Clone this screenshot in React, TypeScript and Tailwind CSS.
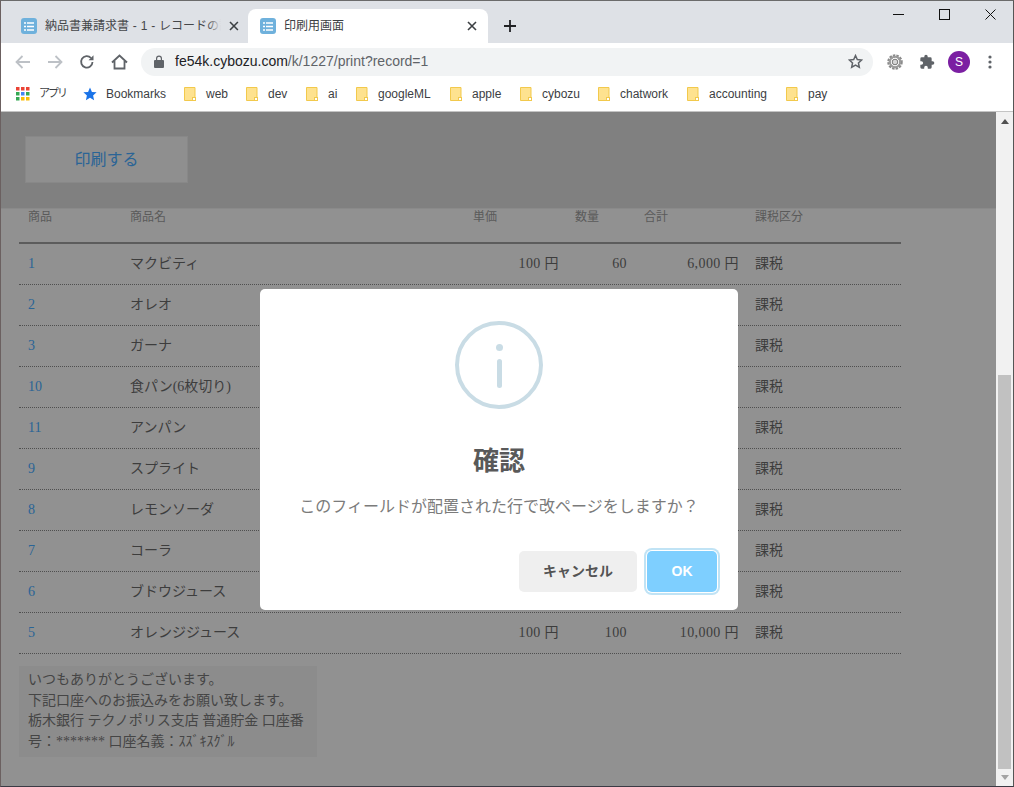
import React from 'react';

const rows = [
  { no: '1', name: 'マクビティ', price: '100 円', qty: '60', total: '6,000 円' },
  { no: '2', name: 'オレオ', price: '100 円', qty: '40', total: '4,000 円' },
  { no: '3', name: 'ガーナ', price: '100 円', qty: '50', total: '5,000 円' },
  { no: '10', name: '食パン(6枚切り)', price: '100 円', qty: '10', total: '1,000 円' },
  { no: '11', name: 'アンパン', price: '100 円', qty: '20', total: '2,000 円' },
  { no: '9', name: 'スプライト', price: '100 円', qty: '30', total: '3,000 円' },
  { no: '8', name: 'レモンソーダ', price: '100 円', qty: '30', total: '3,000 円' },
  { no: '7', name: 'コーラ', price: '100 円', qty: '70', total: '7,000 円' },
  { no: '6', name: 'ブドウジュース', price: '100 円', qty: '80', total: '8,000 円' },
  { no: '5', name: 'オレンジジュース', price: '100 円', qty: '100', total: '10,000 円' },
];

const folders = [
  { label: 'web', w: 'w-[62px]' },
  { label: 'dev', w: 'w-[60px]' },
  { label: 'ai', w: 'w-[50px]' },
  { label: 'googleML', w: 'w-[94px]' },
  { label: 'apple', w: 'w-[70px]' },
  { label: 'cybozu', w: 'w-[78px]' },
  { label: 'chatwork', w: 'w-[89px]' },
  { label: 'accounting', w: 'w-[99px]' },
  { label: 'pay', w: 'w-[50px]' },
];

function TabIcon() {
  return (
    <div className="w-4 h-4 rounded-[3px] bg-[#6fb1dc] flex items-center justify-center shrink-0">
      <svg width="10" height="9" viewBox="0 0 10 9" fill="none" stroke="#fff" strokeWidth="1.3">
        <path d="M0 1h2M3 1h7M0 4.5h2M3 4.5h7M0 8h2M3 8h7" />
      </svg>
    </div>
  );
}

function CloseX() {
  return (
    <svg width="10" height="10" viewBox="0 0 10 10" stroke="#3c4043" strokeWidth="1.6">
      <path d="M1 1l8 8M9 1l-8 8" />
    </svg>
  );
}

function Folder() {
  return (
    <svg width="12" height="14" viewBox="0 0 12 14" className="shrink-0">
      <path d="M.5.5h10.500v11.500h-1.500v1.500h-9z" fill="#fee28f" stroke="#f2c94c" />
      <rect x="8.500" y="10.500" width="3" height="3" fill="#fff" stroke="#f2c94c" />
    </svg>
  );
}

export default function App() {
  return (
    <div className="relative w-[1014px] h-[787px] overflow-hidden bg-white flex flex-col font-['Liberation_Sans','Noto_Sans_CJK_JP',sans-serif] border-l border-t border-r border-b border-l-[#6b6060] border-t-[#6b6b6b] border-r-[#555] border-b-[#3a3a44]">
      {/* tab strip */}
      <div className="h-[42px] bg-[#dee1e6] flex items-end shrink-0 relative">
        <div className="w-[247px] h-[34px] flex items-center pl-[20px] pr-[9px] gap-[8px]">
          <TabIcon />
          <div className="relative w-[178px] overflow-hidden">
            <span className="block text-[12px] text-[#45474a] whitespace-nowrap [word-spacing:0.5px]">納品書兼請求書 - 1 - レコードの詳細</span>
            <div className="absolute right-0 top-0 bottom-0 w-[14px] bg-gradient-to-r from-transparent to-[#dee1e6]"></div>
          </div>
          <CloseX />
        </div>
        <div className="w-[240px] h-[34px] bg-white rounded-t-[8px] flex items-center pl-[12px] pr-[11px] gap-[8px]">
          <TabIcon />
          <span className="text-[12px] text-[#3c4043] flex-1">印刷用画面</span>
          <CloseX />
        </div>
        <div className="ml-[16px] h-[34px] flex items-center">
          <svg width="12" height="12" viewBox="0 0 12 12" stroke="#202124" strokeWidth="1.800">
            <path d="M6 0v12M0 6h12" />
          </svg>
        </div>
        <div className="ml-auto self-start flex items-center pt-[8px] pr-[17px] gap-[35px]">
          <svg width="11" height="11" viewBox="0 0 11 11" stroke="#111" strokeWidth="1"><path d="M0 5.500h11" /></svg>
          <svg width="11" height="11" viewBox="0 0 11 11" fill="none" stroke="#111" strokeWidth="1"><rect x=".5" y=".5" width="10" height="10" /></svg>
          <svg width="11" height="11" viewBox="0 0 11 11" stroke="#111" strokeWidth="1"><path d="M.5.500l10 10M10.500.500l-10 10" /></svg>
        </div>
      </div>

      {/* toolbar */}
      <div className="h-[37px] bg-white flex items-center shrink-0">
        <div className="w-[140px] flex items-center pl-[13px]">
          <svg width="18" height="16" viewBox="0 0 18 16" fill="none" stroke="#bdc1c6" strokeWidth="1.800" className="mr-[14px]"><path d="M16 8H2.500M8.500 2L2.500 8l6 6" /></svg>
          <svg width="18" height="16" viewBox="0 0 18 16" fill="none" stroke="#bdc1c6" strokeWidth="1.800" className="mr-[15px]"><path d="M2 8h13.500M9.500 2l6 6-6 6" /></svg>
          <svg width="16" height="16" viewBox="0 0 16 16" fill="none" stroke="#5f6368" strokeWidth="1.800" className="mr-[16px]"><path d="M13.500 8A5.700 5.700 0 1 1 12 4" /><path d="M14.500 1.200v5h-5z" fill="#5f6368" stroke="none" /></svg>
          <svg width="17" height="16" viewBox="0 0 17 16" fill="none" stroke="#5f6368" strokeWidth="1.800"><path d="M1 8.500L8.500 1.500 16 8.500M3.500 7v7.500h10V7" /></svg>
        </div>
        <div className="w-[732px] h-[28px] rounded-full bg-[#f1f3f4] flex items-center pl-[13px] pr-[10px]">
          <svg width="10" height="13" viewBox="0 0 10 13" className="shrink-0 mr-[11px]"><path d="M1 5h1V3.500a3 3 0 0 1 6 0V5h1a1 1 0 0 1 1 1v6a1 1 0 0 1-1 1H1a1 1 0 0 1-1-1V6a1 1 0 0 1 1-1zm2.200 0h3.600V3.500a1.800 1.800 0 0 0-3.600 0z" fill="#5f6368" /></svg>
          <span className="text-[14px] text-[#202124] flex-1">fe54k.cybozu.com<span className="text-[#5f6368]">/k/1227/print?record=1</span></span>
          <svg width="15" height="15" viewBox="0 0 24 24" fill="none" stroke="#5f6368" strokeWidth="2.400"><path d="M12 2.500l2.900 6.300 6.900.8-5.100 4.700 1.400 6.800-6.100-3.500-6.100 3.500 1.400-6.800L2.200 9.600l6.900-.8z" /></svg>
        </div>
        <div className="flex items-center pl-[14px]">
          <svg width="16" height="16" viewBox="0 0 16 16" className="mr-[16px]">
            <circle cx="8" cy="8" r="6" fill="none" stroke="#8a8a8a" strokeWidth="3.500" strokeDasharray="2.200 1" />
            <circle cx="8" cy="8" r="5.200" fill="none" stroke="#9b9b9b" strokeWidth="2" />
            <circle cx="8" cy="8" r="2.800" fill="#d5d5d5" stroke="#777" strokeWidth="1" />
          </svg>
          <svg width="16" height="16" viewBox="0 0 24 24" fill="#5f6368" className="mr-[13px]"><path d="M20.500 11H19V7a2 2 0 0 0-2-2h-4V3.500a2.500 2.500 0 0 0-5 0V5H4a2 2 0 0 0-2 2v3.800h1.500a2.700 2.700 0 0 1 0 5.400H2V20a2 2 0 0 0 2 2h3.800v-1.500a2.700 2.700 0 0 1 5.400 0V22H17a2 2 0 0 0 2-2v-4h1.500a2.500 2.500 0 0 0 0-5z" /></svg>
          <div className="w-[22px] h-[22px] rounded-full bg-[#7b1fa2] text-white text-[12px] flex items-center justify-center mr-[18px]">S</div>
          <svg width="4" height="14" viewBox="0 0 4 14" fill="#5f6368"><circle cx="2" cy="2" r="1.600" /><circle cx="2" cy="7" r="1.600" /><circle cx="2" cy="12" r="1.600" /></svg>
        </div>
      </div>

      {/* bookmarks bar */}
      <div className="h-[32px] bg-white border-b border-[#c4c4c4] flex items-center pl-[15px] pb-[4px] text-[12px] text-[#3c4043] shrink-0">
        <svg width="14" height="14" viewBox="0 0 14 14" className="mr-[9px] shrink-0">
          <path d="M0 0h3.500v3.500H0zM5 0h3.500v3.500H5zM10 0h3.500v3.500H10z" fill="#ea4335" />
          <path d="M0 5h3.500v3.500H0z" fill="#34a853" />
          <path d="M5 5h3.500v3.500H5z" fill="#4285f4" />
          <path d="M10 5h3.500v3.500H10z" fill="#34a853" />
          <path d="M0 10h3.500v3.500H0z" fill="#34a853" />
          <path d="M5 10h3.500v3.500H5zM10 10h3.500v3.500H10z" fill="#fbbc04" />
        </svg>
        <span className="w-[44px] text-[11px] tracking-[-2px]">アプリ</span>
        <svg width="14" height="14" viewBox="0 0 24 24" fill="#1a73e8" className="mr-[9px] shrink-0"><path d="M12 1l3.300 7.400 8 .8-6 5.400 1.700 7.900-7-4-7 4 1.700-7.900-6-5.400 8-.8z" /></svg>
        <span className="w-[78px]">Bookmarks</span>
        {folders.map((f) => (
          <div key={f.label} className={`flex items-center gap-[10px] shrink-0 ${f.w}`}>
            <Folder />
            <span>{f.label}</span>
          </div>
        ))}
      </div>

      {/* page */}
      <div className="flex-1 flex bg-[#919191] min-h-0">
        <div className="flex-1 flex flex-col min-w-0">
          <div className="h-[97px] bg-[#808080] border-b border-[#8a8a8a] pt-[24px] pl-[24px] shrink-0">
            <div className="w-[163px] h-[47px] pt-[1px] bg-[#8f8f8f] border border-[#888] flex items-center justify-center text-[16px] text-[#2a6496]">印刷する</div>
          </div>
          <div className="ml-[18px] w-[882px] font-['Liberation_Serif','Noto_Sans_CJK_JP',serif] text-[#3d3d3d]">
            <div className="h-[35px] border-b-2 border-[#5c5c5c] grid grid-cols-[102px_343px_102px_70px_111px_1fr] text-[12px] text-[#5a5a5a] leading-[16px]">
              <span className="pl-[9px]">商品</span>
              <span className="pl-[9px]">商品名</span>
              <span className="pl-[9px]">単価</span>
              <span className="pl-[9px]">数量</span>
              <span className="pl-[8px]">合計</span>
              <span className="pl-[8px]">課税区分</span>
            </div>
            {rows.map((r) => (
              <div key={r.no} className="h-[41px] pb-[2px] border-b border-dotted border-[#4f4f4f] grid grid-cols-[102px_343px_102px_70px_111px_1fr] items-center text-[14px]">
                <span className="pl-[9px] text-[#2a6496]">{r.no}</span>
                <span className="pl-[9px]">{r.name}</span>
                <span className="text-right pr-[7px] tracking-[0.4px]">{r.price}</span>
                <span className="text-right pr-[9px] tracking-[0.4px]">{r.qty}</span>
                <span className="text-right pr-[8px] tracking-[0.4px]">{r.total}</span>
                <span className="pl-[8px]">課税</span>
              </div>
            ))}
            <div className="mt-[12px] w-[298px] h-[91px] bg-[#8c8c8c] px-[9px] pt-[4px] text-[14px] leading-[20.500px] text-[#454545]">
              いつもありがとうございます。<br />
              下記口座へのお振込みをお願い致します。<br />
              栃木銀行 テクノポリス支店 普通貯金 口座番号：******* 口座名義：ｽｽﾞｷｽｸﾞﾙ
            </div>
          </div>
        </div>

        {/* scrollbar */}
        <div className="w-[17px] bg-[#f1f1f1] flex flex-col items-center shrink-0">
          <svg width="8" height="5" viewBox="0 0 8 5" fill="#505050" className="mt-[7px]"><path d="M4 0l4 5H0z" /></svg>
          <div className="mt-[251px] w-[13px] h-[394px] bg-[#c1c1c1]"></div>
          <svg width="8" height="5" viewBox="0 0 8 5" fill="#a3a3a3" className="mt-[6px]"><path d="M0 0h8L4 5z" /></svg>
        </div>
      </div>

      {/* dialog */}
      <div className="absolute left-[259px] top-[288px] w-[478px] h-[321px] bg-white rounded-[5px] flex flex-col items-center">
        <div className="mt-[32px] w-[88px] h-[88px] rounded-full border-[4px] border-[#c9dce5] flex flex-col items-center">
          <div className="mt-[19px] w-[7px] h-[7px] rounded-full bg-[#c9dce5]"></div>
          <div className="mt-[8px] w-[5px] h-[29px] rounded-full bg-[#c9dce5]"></div>
        </div>
        <div className="mt-[35px] text-[26px] leading-[34px] font-bold text-[#595959]">確認</div>
        <div className="mt-[17px] text-[16px] leading-[24px] text-[#7b7b7b]">このフィールドが配置された行で改ページをしますか？</div>
        <div className="mt-[32px] self-end flex items-center gap-[10px] pr-[21px]">
          <div className="w-[118px] h-[41px] rounded-[5px] bg-[#efefef] flex items-center justify-center text-[14px] font-bold text-[#545454]">キャンセル</div>
          <div className="w-[70px] h-[41px] rounded-[5px] bg-[#7ecfff] shadow-[0_0_0_1px_#fff,0_0_0_3px_#c0e3f5] flex items-center justify-center text-[14px] font-bold text-white">OK</div>
        </div>
      </div>
    </div>
  );
}
